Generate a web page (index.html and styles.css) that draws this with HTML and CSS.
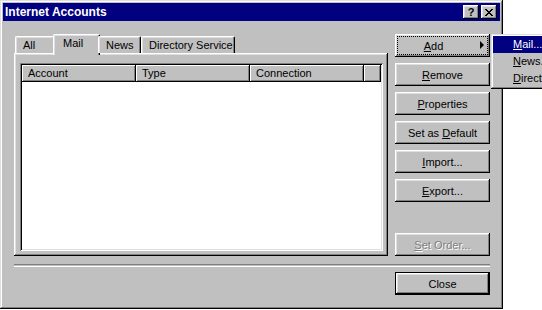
FILE: index.html
```html
<!DOCTYPE html>
<html lang="en">

<head>
  <meta charset="UTF-8">
  <title>Internet Accounts</title>
  <link rel="stylesheet" href="styles.css">
</head>

<body>
  <div class="window">
    <div class="titlebar">
      <span class="title">Internet Accounts</span>
      <div class="caption-buttons">
        <span class="cap-btn">?</span>
        <span class="cap-btn close">
          <svg width="8" height="7" viewBox="0 0 8 7">
            <path d="M0 0h2v1h-2zM6 0h2v1h-2zM1 1h2v1h-2zM5 1h2v1h-2zM2 2h4v1h-4zM3 3h2v1h-2zM2 4h4v1h-4zM1 5h2v1h-2zM5 5h2v1h-2zM0 6h2v1h-2zM6 6h2v1h-2z" fill="#000" />
          </svg>
        </span>
      </div>
    </div>

    <div class="content">
      <div class="main">
        <div class="tab-area">
          <div class="tabs">
            <div class="tab tab-all">All</div>
            <div class="tab tab-mail selected">Mail</div>
            <div class="tab tab-news">News</div>
            <div class="tab tab-dir">Directory Service</div>
          </div>
          <div class="panel">
            <div class="listview">
              <div class="list-header">
                <div class="col col-account">Account</div>
                <div class="col col-type">Type</div>
                <div class="col col-conn">Connection</div>
                <div class="col col-fill"></div>
              </div>
            </div>
          </div>
        </div>

        <div class="side-buttons">
          <button class="btn btn-add"><span class="focus"><u>A</u>dd</span><span class="arrow"></span></button>
          <button class="btn"><u>R</u>emove</button>
          <button class="btn"><u>P</u>roperties</button>
          <button class="btn">Set as <u>D</u>efault</button>
          <button class="btn"><u>I</u>mport...</button>
          <button class="btn"><u>E</u>xport...</button>
          <button class="btn disabled btn-order"><u>S</u>et Order...</button>
        </div>
      </div>

      <div class="separator"></div>

      <div class="footer">
        <button class="btn default">Close</button>
      </div>
    </div>
  </div>

  <div class="menu">
    <div class="menu-item active"><u>M</u>ail...</div>
    <div class="menu-item"><u>N</u>ews...</div>
    <div class="menu-item"><u>D</u>irectory Service...</div>
  </div>
</body>

</html>
```

FILE: styles.css
```css
html,
body {
  margin: 0;
  height: 100%;
  overflow: hidden;
  background-color: white;
  font-family: "Liberation Sans", Arial, sans-serif;
  font-size: 11px;
  color: black;
}

body {
  position: relative;
}

.window {
  box-sizing: border-box;
  width: 503px;
  height: 309px;
  padding: 3px;
  background-color: #c0c0c0;
  box-shadow: inset -1px -1px #000, inset 1px 1px #dfdfdf, inset -2px -2px #808080, inset 2px 2px #fff;
}

.titlebar {
  display: flex;
  align-items: center;
  justify-content: space-between;
  height: 18px;
  padding: 0 3px 0 2px;
  background-color: #000080;
}

.title {
  color: white;
  font-weight: bold;
  font-size: 12px;
}

.caption-buttons {
  display: flex;
  gap: 2px;
}

.cap-btn {
  box-sizing: border-box;
  display: flex;
  align-items: center;
  justify-content: center;
  width: 16px;
  height: 14px;
  background-color: #c0c0c0;
  font-weight: bold;
  font-size: 11px;
  line-height: 1;
  box-shadow: inset -1px -1px #000, inset 1px 1px #fff, inset -2px -2px #808080, inset 2px 2px #dfdfdf;
}

.content {
  padding: 13px 10px 0 11px;
}

.main {
  display: flex;
  gap: 7px;
  height: 222px;
}

/* タブ */
.tab-area {
  display: flex;
  flex-direction: column;
  width: 374px;
}

.tabs {
  display: flex;
  align-items: flex-end;
  height: 19px;
  padding-left: 1px;
  position: relative;
  z-index: 1;
}

.tab {
  box-sizing: border-box;
  height: 17px;
  padding: 2px 0 0 7px;
  line-height: 13px;
  background-color: #c0c0c0;
  border-top: 1px solid #fff;
  border-left: 1px solid #fff;
  border-right: 1px solid #000;
  box-shadow: inset -1px 0 #808080, inset 1px 1px #dfdfdf;
  border-radius: 2px 2px 0 0;
  white-space: nowrap;
}

.tab.selected {
  height: 21px;
  margin: 0 -2px -2px -2px;
  padding: 2px 0 0 9px;
}

.tab-all { width: 40px; }
.tab-mail { width: 47px; }
.tab-news { width: 43px; }
.tab-dir { width: 94px; }

/* box-shadow の枠は場所を取らないので padding に含める */
.panel {
  box-sizing: border-box;
  flex: 1;
  padding: 10px 5px 5px 6px;
  box-shadow: inset -1px -1px #000, inset 1px 1px #fff, inset -2px -2px #808080, inset 2px 2px #dfdfdf;
}

.listview {
  box-sizing: border-box;
  height: 100%;
  padding: 2px;
  background-color: white;
  box-shadow: inset 1px 1px #808080, inset -1px -1px #fff, inset 2px 2px #000, inset -2px -2px #dfdfdf;
}

.list-header {
  display: flex;
  height: 17px;
}

.col {
  box-sizing: border-box;
  height: 17px;
  padding: 2px 0 0 6px;
  line-height: 13px;
  background-color: #c0c0c0;
  box-shadow: inset -1px -1px #000, inset 1px 1px #fff, inset -2px -2px #808080;
}

.col-account { width: 114px; }
.col-type { width: 114px; }
.col-conn { width: 114px; }
.col-fill { flex: 1; }

/* ボタン */
.side-buttons {
  display: flex;
  flex-direction: column;
  gap: 6px;
  width: 95px;
}

.btn {
  box-sizing: border-box;
  width: 95px;
  height: 23px;
  padding: 0;
  border: none;
  background-color: #c0c0c0;
  font-family: inherit;
  font-size: 11px;
  color: black;
  box-shadow: inset -1px -1px #000, inset 1px 1px #fff, inset -2px -2px #808080, inset 2px 2px #dfdfdf;
}

.btn-add {
  position: relative;
  padding: 3px;
}

.btn-add .focus {
  box-sizing: border-box;
  display: flex;
  align-items: center;
  justify-content: center;
  height: 17px;
  padding-right: 18px;
  outline: 1px dotted #000;
}

.btn-add .arrow {
  position: absolute;
  right: 6px;
  top: 7px;
  width: 0;
  height: 0;
  border-top: 4px solid transparent;
  border-bottom: 4px solid transparent;
  border-left: 4px solid #000;
}

.btn.disabled {
  color: #808080;
  text-shadow: 1px 1px 0 #fff;
}

.btn-order {
  margin-top: auto;
}

.btn.default {
  border: 1px solid #000;
}

.separator {
  height: 1px;
  margin-top: 8px;
  border-top: 1px solid #808080;
  border-bottom: 1px solid #fff;
}

.footer {
  display: flex;
  justify-content: flex-end;
  margin-top: 5px;
}

/* ポップアップメニュー */
.menu {
  position: absolute;
  left: 491px;
  top: 34px;
  width: 150px;
  padding: 2px;
  background-color: #c0c0c0;
  box-shadow: inset -1px -1px #000, inset 1px 1px #dfdfdf, inset -2px -2px #808080, inset 2px 2px #fff;
}

.menu-item {
  height: 17px;
  padding-left: 20px;
  line-height: 17px;
  white-space: nowrap;
}

.menu-item.active {
  background-color: #000080;
  color: white;
}
```
